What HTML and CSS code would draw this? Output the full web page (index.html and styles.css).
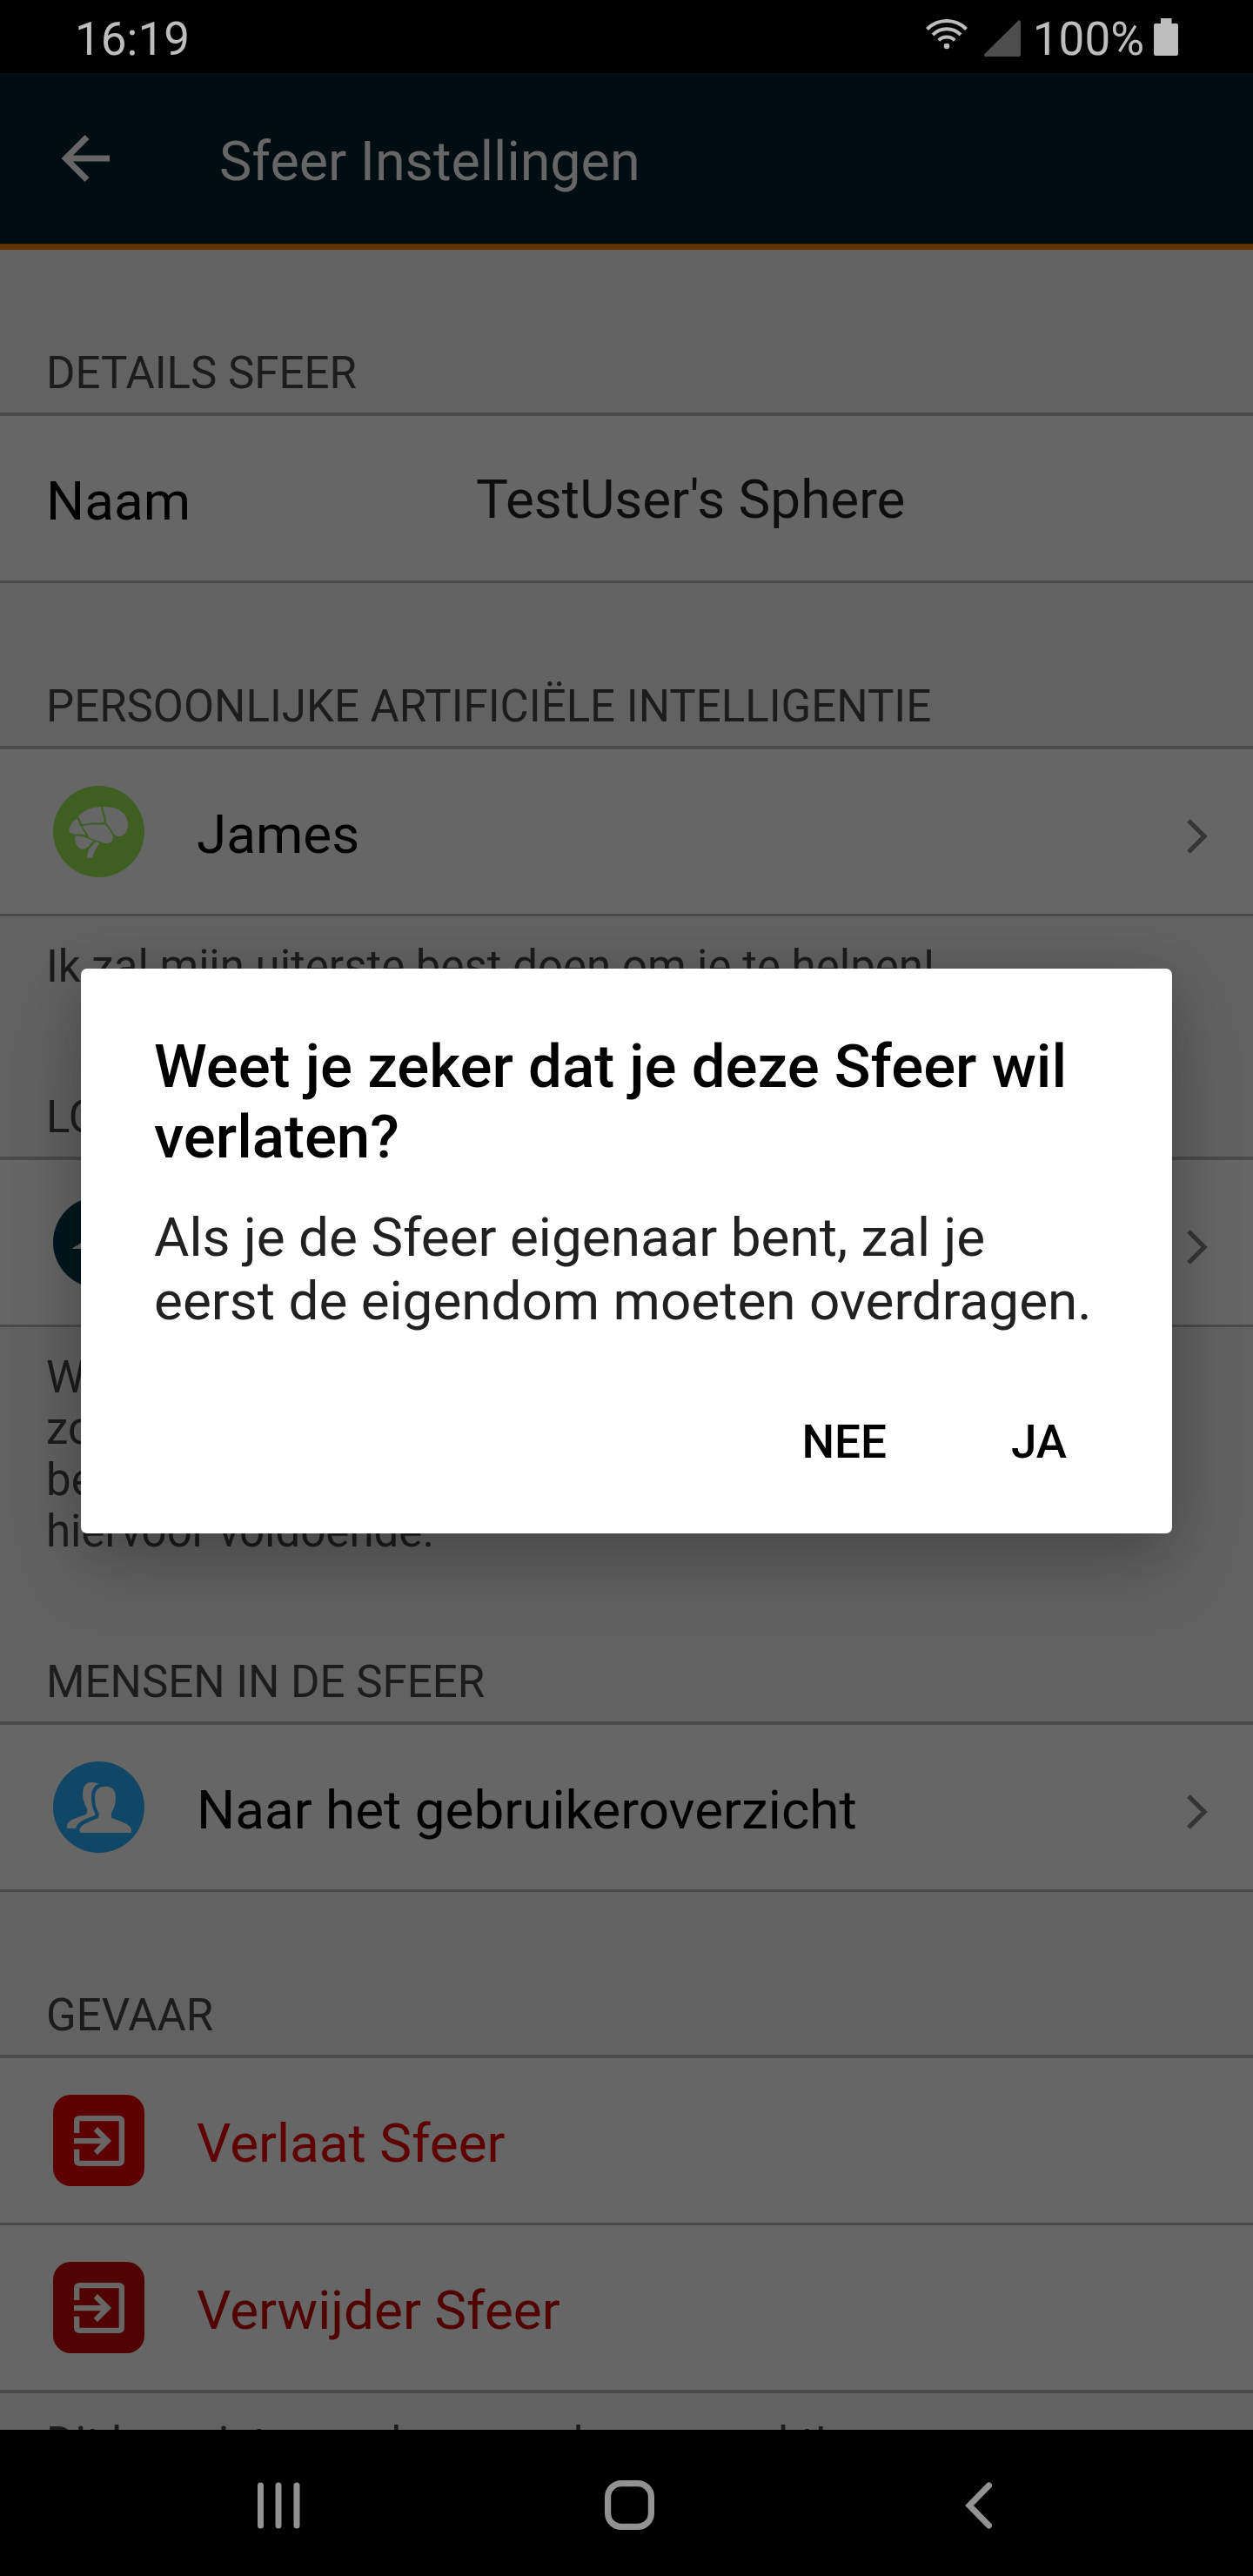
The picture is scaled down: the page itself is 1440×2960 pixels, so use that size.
FILE: index.html
```
<!DOCTYPE html>
<html lang="nl">
<head>
<meta charset="utf-8">
<title>Sfeer Instellingen</title>
<link rel="stylesheet" href="styles.css">
</head>
<body>
<div class="screen">
  <header class="status">
    <span class="clock">16:19</span>
    <div class="indicators">
      <svg class="wifi" viewBox="0 0 48 36" width="48" height="36">
        <g fill="none" stroke="#bdbdbd" stroke-width="4">
          <path d="M1.5 12.5a31.5 31.5 0 0 1 45 0"/>
          <path d="M8 19a22.5 22.5 0 0 1 32 0"/>
          <path d="M14.8 25.4a13 13 0 0 1 18.4 0"/>
        </g>
        <circle cx="24" cy="32" r="3.3" fill="#bdbdbd"/>
      </svg>
      <svg class="signal" viewBox="0 0 42 42" width="42" height="42"><path d="M39.5.5Q42-.5 42 3v37q0 2-2 2H2q-3 0-1.500-3z" fill="#4d4d4d"/></svg>
      <span class="percent">100%</span>
      <svg class="battery" viewBox="0 0 28 43" width="28" height="43"><path d="M8 0h12.500v6H26q2 0 2 2v33q0 2-2 2H2q-2 0-2-2V8q0-2 2-2h6z" fill="#bdbdbd"/></svg>
    </div>
  </header>

  <nav class="topbar">
    <svg class="back" viewBox="0 0 56 56" width="56" height="56"><path d="M30 3.500 5.500 28 30 52.500M5.500 28H56" fill="none" stroke="#666" stroke-width="7"/></svg>
    <h1>Sfeer Instellingen</h1>
  </nav>

  <main class="list">
    <h2>DETAILS SFEER</h2>
    <div class="row">
      <span class="key">Naam</span><span class="value">TestUser's Sphere</span>
    </div>

    <h2>PERSOONLIJKE ARTIFICIËLE INTELLIGENTIE</h2>
    <div class="row">
      <svg class="icon" viewBox="63 69 315 315">
        <circle cx="220.500" cy="226.500" r="157.500" fill="#3f5e22"/>
        <g fill="#666">
          <path d="M149 174Q178 142 228 141Q228 153 234 166Q240 180 239 194Q222 197 202 196Q180 199 162 202Q158 186 149 174Z"/>
          <path d="M235 141Q282 139 305 163Q322 182 321 204Q317 243 290 243Q276 243 267 227Q260 212 247 198Q248 181 241 165Q235 153 235 141Z"/>
          <path d="M145 181Q151 189 154 204Q162 213 167 223Q173 231 175 240Q160 233 146 235Q133 236 121 231Q114 220 123 205Q131 190 145 181Z"/>
          <path d="M163 208Q184 204 205 202Q224 204 241 202Q255 213 262 228Q270 240 270 250Q267 266 248 268Q236 268 224 261Q205 257 187 247Q180 228 163 208Z"/>
          <path d="M137 242Q157 239 178 248Q190 255 203 258Q192 268 184 278Q174 289 162 288Q139 282 137 242Z"/>
          <path d="M208 262Q216 262 224 267Q205 290 198 318Q189 319 180 317Q181 300 187 286Q199 277 208 262Z"/>
        </g>
      </svg>
      <span class="label">James</span>
      <svg class="chevron" viewBox="0 0 24 40" width="24" height="40"><path d="M2 2 20 20 2 38" fill="none" stroke="#353535" stroke-width="5.300"/></svg>
    </div>
    <p class="note">Ik zal mijn uiterste best doen om je te helpen!</p>

    <h2>LOKALISATIE</h2>
    <div class="row">
      <svg class="icon" viewBox="15 15 315 315">
        <circle cx="172.500" cy="172.500" r="157.500" fill="#00171e"/>
        <path d="M82 192 250 95 160 270V195H84Z" fill="#666"/>
      </svg>
      <span class="label">Binnenshuis</span>
      <svg class="chevron" viewBox="0 0 24 40" width="24" height="40"><path d="M2 2 20 20 2 38" fill="none" stroke="#353535" stroke-width="5.300"/></svg>
    </div>
    <p class="note">Wil je lokalisatie gebruiken?<br>zorg dat er genoeg Crownstones zijn,<br>bepaal de kamers. Vier zijn<br>hiervoor voldoende.</p>

    <h2>MENSEN IN DE SFEER</h2>
    <div class="row">
      <svg class="icon" viewBox="15 15 315 315">
        <circle cx="172.500" cy="172.500" r="157.500" fill="#114766"/>
        <g fill="#666">
          <path d="M173 92Q160 86 146 87Q117 89 117 127Q117 153 132 178Q134 190 129 197Q112 203 93 211Q72 218 65 230Q61 239 64 246H93Q95 234 106 226Q122 214 143 207Q160 202 161 197Q146 172 147 132Q148 100 173 92Z"/>
          <path d="M194 101Q231 101 231 139Q231 169 217 190Q214 200 217 210Q242 218 263 228Q284 237 285 253Q286 261 279 261H112Q105 261 106 252Q107 239 129 228Q150 218 170 210Q176 198 171 190Q159 171 159 142Q159 101 194 101Z"/>
        </g>
      </svg>
      <span class="label">Naar het gebruikeroverzicht</span>
      <svg class="chevron" viewBox="0 0 24 40" width="24" height="40"><path d="M2 2 20 20 2 38" fill="none" stroke="#353535" stroke-width="5.300"/></svg>
    </div>

    <h2>GEVAAR</h2>
    <div class="row">
      <svg class="icon" viewBox="15 15 315 315">
        <rect x="15" y="15" width="315" height="315" rx="61" fill="#5e0000"/>
        <path d="M96.500 147V106.500q0-10 10-10H241.500q10 0 10 10V241.500q0 10-10 10H106.500q-10 0-10-10V203" fill="none" stroke="#666" stroke-width="19"/>
        <path d="M168 126 216 174 168 222 155 209 180 184H87V165H180L155 140Z" fill="#666"/>
      </svg>
      <span class="label leave">Verlaat Sfeer</span>
    </div>
    <div class="row last">
      <svg class="icon" viewBox="15 15 315 315">
        <rect x="15" y="15" width="315" height="315" rx="61" fill="#500300"/>
        <path d="M96.500 147V106.500q0-10 10-10H241.500q10 0 10 10V241.500q0 10-10 10H106.500q-10 0-10-10V203" fill="none" stroke="#666" stroke-width="19"/>
        <path d="M168 126 216 174 168 222 155 209 180 184H87V165H180L155 140Z" fill="#666"/>
      </svg>
      <span class="label remove">Verwijder Sfeer</span>
    </div>
    <p class="note">Dit kan niet ongedaan worden gemaakt!</p>
  </main>

  <footer class="navbar">
    <svg viewBox="0 0 50 54" width="50" height="54"><path d="M4.500 4V50M25 4V50M46 4V50" stroke="#929292" stroke-width="7" stroke-linecap="round"/></svg>
    <svg class="home" viewBox="0 0 57 57" width="57" height="57"><rect x="3.600" y="3.600" width="49.800" height="49.800" rx="15.500" fill="none" stroke="#929292" stroke-width="7.200"/></svg>
    <svg viewBox="0 0 32 54" width="32" height="54"><path d="M28.500 4 6 27 28.500 50" fill="none" stroke="#929292" stroke-width="7" stroke-linecap="round"/></svg>
  </footer>

  <div class="dialog" role="alertdialog">
    <h3>Weet je zeker dat je deze Sfeer wil verlaten?</h3>
    <p>Als je de Sfeer eigenaar bent, zal je eerst de eigendom moeten overdragen.</p>
    <div class="actions"><button>NEE</button><button>JA</button></div>
  </div>
</div>
</body>
</html>
```
FILE: styles.css
```
* { box-sizing: border-box; margin: 0; padding: 0; }

body { background: #000; font-family: Roboto, "Liberation Sans", sans-serif; }

.screen {
  position: relative;
  display: flex;
  flex-direction: column;
  width: 1440px;
  height: 2960px;
  overflow: hidden;
}

.status {
  display: flex;
  justify-content: space-between;
  flex: none;
  height: 84px;
  padding: 0 86px 0 86px;
  background: #000;
  color: #bdbdbd;
  font-size: 53px;
  line-height: 90px;
}
.indicators { display: flex; align-items: flex-start; }
.wifi { margin-top: 21px; }
.signal { margin: 23px 0 0 19px; }
.percent { margin-left: 14px; }
.battery { margin: 21px 0 0 11px; }

.topbar {
  display: flex;
  flex: none;
  height: 203px;
  background: #000d11;
  border-bottom: 7px solid #603300;
}
.back { margin: 70px 0 0 70px; }
.topbar h1 {
  margin-left: 126px;
  color: #666;
  font-size: 62.800px;
  font-weight: 400;
  line-height: 203px;
}

.list {
  flex: none;
  height: 2505px;
  overflow: hidden;
  background: #626262;
}
.list h2 {
  height: 187px;
  padding: 112px 0 0 53px;
  color: #1c1c1c;
  font-size: 51px;
  font-weight: 400;
  line-height: 60px;
  white-space: nowrap;
}
.row {
  display: flex;
  align-items: center;
  height: 196px;
  padding: 0 52px 0 53px;
  background: #666;
  border-top: 4px solid #4a4a4a;
  border-bottom: 3px solid #4a4a4a;
  color: #000;
  font-size: 62px;
  line-height: 196px;
  white-space: nowrap;
}
.row.last { height: 193px; border-top: 0; border-bottom-width: 4px; }
.key { width: 494px; align-self: flex-start; }
.value { color: #0e0e0e; line-height: 192px; align-self: flex-start; }
.icon { flex: none; width: 105px; height: 105px; margin: 0 60px 0 8px; }
.label { flex: 1; align-self: flex-start; }
.leave { color: #5e0000; }
.remove { color: #500300; }
.chevron { flex: none; margin-top: 11px; }
.note {
  padding: 28px 0 2px 53px;
  color: #1c1c1c;
  font-size: 51px;
  line-height: 59px;
  white-space: nowrap;
}

.navbar {
  display: flex;
  align-items: center;
  justify-content: space-between;
  flex: none;
  height: 168px;
  padding: 5px 300px 0 295px;
  background: #000;
}
.home { margin-left: -7px; }

.dialog {
  position: absolute;
  left: 93px;
  top: 1113px;
  width: 1254px;
  height: 649px;
  padding: 72px 80px 0 84px;
  border-radius: 7px;
  background: #fff;
  box-shadow: 0 42px 84px rgba(0, 0, 0, .2), 0 0 60px rgba(0, 0, 0, .12);
}
.dialog h3 {
  color: #000;
  font-size: 69px;
  font-weight: 500;
  line-height: 81px;
}
.dialog p {
  margin-top: 38px;
  color: #212121;
  font-size: 62px;
  line-height: 73px;
}
.actions {
  display: flex;
  justify-content: flex-end;
  gap: 143px;
  margin-top: 95px;
  padding-right: 41px;
}
.actions button {
  border: 0;
  background: none;
  color: #000;
  font: 500 53px/62px Roboto, "Liberation Sans", sans-serif;
}
```
